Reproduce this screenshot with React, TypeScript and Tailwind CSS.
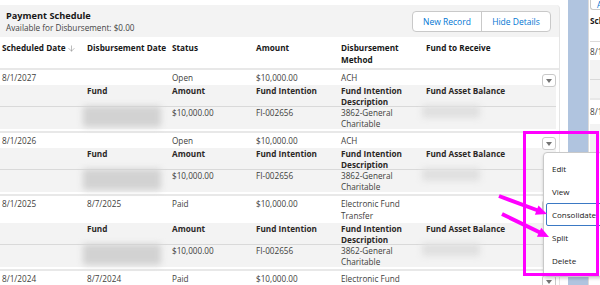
import { ArrowDown } from "lucide-react";

type Row = {
  sched: string;
  disb: string;
  status: string;
  amount: string;
  method: string[];
};

const rows: Row[] = [
  { sched: "8/1/2027", disb: "", status: "Open", amount: "$10,000.00", method: ["ACH"] },
  { sched: "8/1/2026", disb: "", status: "Open", amount: "$10,000.00", method: ["ACH"] },
  { sched: "8/1/2025", disb: "8/7/2025", status: "Paid", amount: "$10,000.00", method: ["Electronic Fund", "Transfer"] },
  { sched: "8/1/2024", disb: "8/7/2024", status: "Paid", amount: "$10,000.00", method: ["Electronic Fund", "Transfer"] },
];

const cols = "grid grid-cols-[85px_85px_84px_85px_85px_85px_1fr] pl-[2px]";

function Toggle() {
  return (
    <div className="flex justify-end pr-[3px]">
      <button className="mt-[2px] mb-[-4px] flex h-[13px] w-[14px] items-center justify-center rounded-[3px] border border-[#c9c9c9] bg-white">
        <svg width="6" height="4" viewBox="0 0 6 4">
          <path d="M0 0h6L3 4z" fill="#747474" />
        </svg>
      </button>
    </div>
  );
}

function Blur({ w, h, tone }: { w: string; h: string; tone: string }) {
  return <div className={`${w} ${h} ${tone} rounded-[2px] blur-[3px]`} />;
}

function ScheduleRow({ r }: { r: Row }) {
  return (
    <div className="border-t-2 border-[#e8e8e8]">
      {/* main line */}
      <div className={`${cols} pt-[2px] pb-[1px] text-[#3e3e3c]`}>
        <div>{r.sched}</div>
        <div>{r.disb}</div>
        <div>{r.status}</div>
        <div>{r.amount}</div>
        <div>
          {r.method.map((m) => (
            <div key={m}>{m}</div>
          ))}
        </div>
        <div />
        <Toggle />
      </div>

      {/* detail table */}
      <div className="mr-[3px] bg-[#f3f3f3] leading-[11px]">
        <div className={`${cols} h-[22px] border-b border-[#d9d9d9] font-bold text-[#2b2826]`}>
          <div />
          <div>Fund</div>
          <div>Amount</div>
          <div>Fund Intention</div>
          <div>
            Fund Intention
            <br />
            Description
          </div>
          <div>Fund Asset Balance</div>
        </div>
        <div className={`${cols} h-[22px] text-[#3e3e3c]`}>
          <div />
          <div className="-ml-[4px] -mt-[1px]">
            <Blur w="w-[78px]" h="h-[21px]" tone="bg-[#d2d2d2]" />
          </div>
          <div>{r.amount}</div>
          <div>FI-002656</div>
          <div>
            3862-General
            <br />
            Charitable
          </div>
          <div className="-ml-[4px] mt-[-2px]">
            <Blur w="w-[58px]" h="h-[13px]" tone="bg-[#e0e0e0]" />
          </div>
        </div>
      </div>
      <div className="h-[2px]" />
    </div>
  );
}

function SidePanel() {
  return (
    <div className="w-[12px] overflow-hidden border-l border-[#dddbda] pl-[1px] text-[#3e3e3c]">
      <div className="h-[10px] rounded-bl-[3px] border-b border-l border-[#c9c9c9] pl-[6px] leading-[9px] text-[#0176d3]">A</div>
      <div className="h-[32px] border-b border-[#dddbda] pt-[5px] font-bold text-[#181818]">Sched</div>
      <div className="h-[18px] pt-[4px]">8/1</div>
      <div className="h-[38px] bg-[#f3f3f3]">
        <div className="h-[20px] border-b border-[#d9d9d9]" />
      </div>
      <div className="h-[26px] border-t-2 border-[#e8e8e8] pt-[6px]">8/1</div>
      <div className="h-[38px] bg-[#f3f3f3]" />
      <div className="h-[26px] border-t-2 border-[#e8e8e8] pt-[6px]">8/1</div>
      <div className="h-[38px] bg-[#f3f3f3]" />
      <div className="h-[26px] border-t-2 border-[#e8e8e8] pt-[6px]">8/1</div>
    </div>
  );
}

function ActionMenu() {
  const items = ["Edit", "View", "Consolidate", "Split", "Delete"];
  return (
    <div className="absolute left-[543px] top-[152px] w-[60px] rounded-[4px] border border-[#c9c9c9] bg-white py-[4px] text-[8px] shadow-[0_2px_3px_rgba(0,0,0,0.16)]">
      {items.map((it) =>
        it === "Consolidate" ? (
          <div
            key={it}
            className="ml-[2px] flex h-[23px] items-center rounded-[2px] border-[1.5px] border-[#3b79c4] pl-[5px] text-[#181818]"
          >
            {it}
          </div>
        ) : (
          <div key={it} className="flex h-[23px] items-center pl-[8px] text-[#181818]">
            {it}
          </div>
        )
      )}
    </div>
  );
}

function Annotations() {
  return (
    <>
      <div className="absolute left-[523px] top-[131px] h-[145px] w-[76px] border-[3px] border-[#ff00ff]" />
      <svg className="pointer-events-none absolute left-0 top-0" width="600" height="285">
        <line x1="499" y1="196" x2="538" y2="210.5" stroke="#ff00ff" strokeWidth="4" />
        <polygon points="547,214 534.9,214.8 538.5,205.4" fill="#ff00ff" />
        <line x1="502" y1="214" x2="540" y2="232.5" stroke="#ff00ff" strokeWidth="4" />
        <polygon points="549,237 536.9,236.7 541.3,227.7" fill="#ff00ff" />
      </svg>
    </>
  );
}

export default function App() {
  return (
    <div className="relative flex h-[285px] w-[600px] overflow-hidden bg-white font-['Open_Sans','Noto_Sans',sans-serif] text-[8.2px] leading-[12px]">
      {/* Payment schedule card */}
      <div className="mt-[5px] w-[560px] shrink-0 rounded-tr-[4px] border-r border-[#e5e5e5] bg-[#f3f3f3]">
        <div className="flex h-[32px] justify-between pl-[6px] pr-[8px]">
          <div className="pt-[5px]">
            <div className="text-[9.2px] font-bold text-[#181818]">Payment Schedule</div>
            <div className="text-[#444444]">Available for Disbursement: $0.00</div>
          </div>
          <div className="mt-[6px] flex h-[21px] rounded-[4px] border border-[#c9c9c9] bg-white text-[8.5px] text-[#0176d3]">
            <button className="w-[69px] border-r border-[#c9c9c9]">New Record</button>
            <button className="w-[68px]">Hide Details</button>
          </div>
        </div>

        <div className="bg-white">
          <div className={`${cols} h-[31px] pt-[5px] font-bold text-[#181818]`}>
            <div className="flex items-start gap-[1px]">
              Scheduled Date
              <ArrowDown size={9} strokeWidth={1.5} className="mt-[2px] text-[#8a8a8a]" />
            </div>
            <div>Disbursement Date</div>
            <div>Status</div>
            <div>Amount</div>
            <div>
              Disbursement
              <br />
              Method
            </div>
            <div>Fund to Receive</div>
            <div />
          </div>
          {rows.map((r) => (
            <ScheduleRow key={r.sched} r={r} />
          ))}
        </div>
      </div>

      <div className="w-[8px] shrink-0" />
      <div className="w-[20px] shrink-0 bg-[#b0c4df]" />
      <SidePanel />

      <ActionMenu />
      <Annotations />
    </div>
  );
}
